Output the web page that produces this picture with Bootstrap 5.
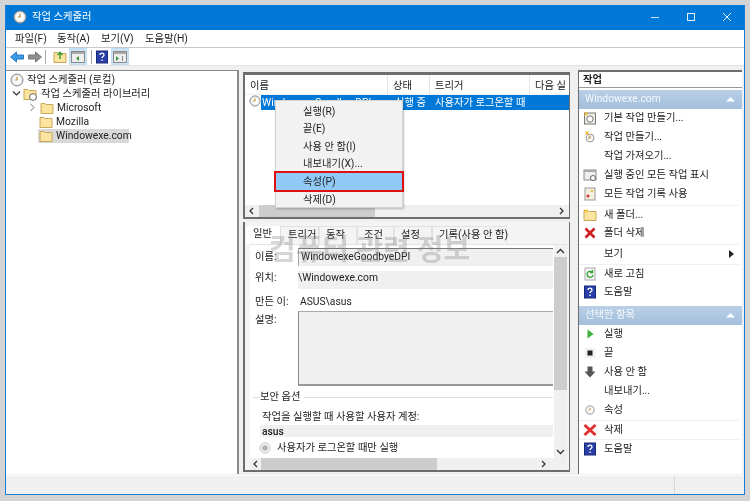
<!DOCTYPE html>
<html lang="ko">
<head>
<meta charset="utf-8">
<title>작업 스케줄러</title>
<link rel="stylesheet" href="https://cdn.jsdelivr.net/npm/bootstrap@5.3.0/dist/css/bootstrap.min.css">
<style>
html,body{margin:0;height:501px;overflow:hidden}
body{background:#d4d4d4;padding:5px;font:10.3px/14px Roboto,"Noto Sans CJK KR",sans-serif;color:#222}
svg{flex:none}
.win{width:740px;height:490px;background:#f0f0f0;border:1px solid #1a7fd4;border-top:0;position:relative;filter:blur(.3px)}
.tbar{height:25px;background:#0078d7;color:#fff;padding-left:7px;gap:5px}
.ctl{width:36px;display:flex;justify-content:center}
.ctls{margin-left:auto;margin-right:-1px}
.mbar{height:18px;background:#fff;border-bottom:1px solid #c8c8c8;padding-top:1px}
.m1{margin-left:9px;width:42px}.m2{width:44px}.m3{width:44px}
.tools{height:18px;background:#fff;padding:1px 0 0 4px;border-bottom:1px solid #e4e4e4}
.tbtn{width:18px;height:17px;background:#cce4f7;border:1px solid #c2dcf0;display:flex;align-items:center;justify-content:center}
.tsep{width:1px;height:14px;background:#a8a8a8}
.g1{margin-right:4px}.g2{margin:0 7px 0 3px}.g3{margin-right:2px}.g4{margin:0 3px 0 4px}
.main{height:405px;margin-top:4px;gap:2px}
.ltree{width:233px;background:#fff;border-top:1px solid #8a8a8a;border-right:2px solid #8a8a8a;padding-top:2px}
.tr{height:14px;display:flex;align-items:center;white-space:nowrap;gap:3px}
.tr1{padding-left:4px}.tr2{padding-left:6px;gap:1px}.tr2 span{margin-left:2px}.tr3{padding-left:22px}
.tr4{padding-left:33px}
.sel1{background:#d9d9d9;width:91px;margin-left:32px;padding-left:1px;gap:3px}
.cent{width:327px;margin-left:2px;gap:3px}
.cpane{border:2px solid #6d6d6d;border-right-width:1px;background:#fff;position:relative}
.ptop{height:147px;margin-top:2px;border-top-width:3px}
.thead{height:20px;border-bottom:1px solid #f0f0f0}
.thead div{border-right:1px solid #e5e5e5;height:20px;padding:4px 0 0 5px;overflow:hidden;white-space:nowrap}
.c1{width:143px}.c2{width:42px}.c3{width:100px}.c4{width:39px;border:0!important}
.rowsel{height:15px;padding-left:4px;white-space:nowrap;gap:0}
.rowblue{background:#0078d7;color:#fff;flex:1;height:15px;padding-left:1px;display:flex;line-height:15px}
.rn{width:132px;display:block}.rst{width:41px;padding-left:1px;display:block;white-space:nowrap}
.hs{background:#f0f0f0;height:12px;display:flex;align-items:center}
.hs b{display:block;background:#cdcdcd;height:12px}
.w1{width:116px}.w2{width:176px}
.hsa{position:absolute;left:0;right:0;bottom:0}
.ra{margin-left:auto}
.cmenu{position:absolute;left:30px;top:25px;width:128px;height:108px;background:#f2f2f2;border:1px solid #d2d2d2;box-shadow:1px 1px 2px rgba(0,0,0,.25);z-index:3;padding-top:2px}
.cm{height:17.4px;padding-left:27px;line-height:17px}
.cmon{background:#91c9f7;outline:2px solid #e01010;outline-offset:-1px;margin:0 -1px;padding-left:28px;height:19px;line-height:19px}
.pbot{height:250px;border-top:0;background:#f4f4f4;padding-top:4px}
.tabs{height:18px;padding-left:1px;background:#f4f4f4;margin:0;border:0;flex-wrap:nowrap}
.tb{padding:1px 4px 0;height:18px;border:1px solid #e2e2e2;border-bottom:0;white-space:nowrap}
.tb0{background:#fff;border-color:#fff;padding:0 7px 0 6px}
.t1{width:39px;padding-left:7px}.t2{width:38px;padding-left:6px}.t3{width:37px;padding-left:6px}.t4{width:38px;padding-left:6px}.t5{width:75px;padding-left:6px}
.tbody{background:#fff;height:226px;margin:0 2px 0 5px;position:relative;border-top:1px solid #e4e4e4;overflow:hidden}
.lbl{position:absolute;left:5px}
.finp{position:absolute;left:48px;width:255px;background:#f0f0f0}
.vs{position:absolute;right:0;top:0;bottom:12px;width:13px;background:#f0f0f0}
.vs i{position:absolute;left:0;right:0;top:12px;height:133px;background:#cdcdcd}
.a{top:3px;height:18px;border-top:1px solid #777;border-left:1px solid #aaa;padding-left:2px;line-height:16px}
.b{top:26px;height:18px;line-height:14px}
.c{top:66px;height:75px;border-top:1px solid #aaa;border-left:1px solid #888;border-bottom:2px solid #999}
.d{top:152px;left:3px;width:300px;height:1px;background:#ddd}
.e{top:180px;left:10px;width:293px;height:12px;padding-left:2px;line-height:13px;font-weight:500}
.l1{top:5px}.l2{top:26px}.l3{top:50px}.l3b{top:50px;left:50px}.l4{top:68px}.l5{top:145px;left:10px;z-index:1}.l6{top:165px;left:12px}.l7{top:197px;left:9px}.l8{top:196px;left:27px}
.rp{width:164px;margin-left:6px;background:#fff;border:2px solid #6d6d6d;border-width:2px 0 0 1px}
.rh{height:16px;font-weight:700;padding-left:4px;border-bottom:1px solid #9a9a9a;line-height:15px}
.rbar{height:19px;margin-top:2px;background:linear-gradient(#b9cfe6,#a3bfdc);color:#f4f8fc;padding:0 7px 0 6px;display:flex;align-items:center;justify-content:space-between}
.rb2{margin-top:4px}
.ri{height:19px;display:flex;align-items:center;padding-left:4px;gap:7px;white-space:nowrap}
.ri svg{width:14px;height:14px}
.ri .tri{width:5px;height:8px;margin-left:auto;margin-right:5px}
.rs{border-top:1px solid #f0f0f0;margin-top:1px;margin-right:3px}
.rt{border-top:1px solid #f0f0f0;margin-right:3px}
.nic{display:block;width:14px;flex:none}
.wm{position:absolute;left:24px;top:13px;font-size:29px;line-height:30px;font-weight:700;color:rgba(130,130,130,.33);z-index:2;white-space:nowrap}
.stat{height:19px;margin-top:1px;background:#f0f0f0;border-top:1px solid #fafafa}
.stat i{display:block;margin-left:auto;width:70px;border-left:1px solid #d8d8d8;height:18px}
.sdef{position:absolute;width:0;height:0}
</style>
</head>
<body>
<svg class="sdef">
<defs>
<symbol id="clk" viewBox="0 0 14 14"><circle cx="7" cy="7" r="6" fill="#e4e4e4" stroke="#8a8a8a"/><circle cx="7" cy="7" r="4.2" fill="#fff"/><path d="M7 3.800V7H4.600" fill="none" stroke="#c09030" stroke-width="1.200"/></symbol>
<symbol id="fld" viewBox="0 0 14 14"><path d="M1 2.500h4l1 1h7v9H1z" fill="#fbe3a0" stroke="#c9a85a"/></symbol>
<symbol id="help" viewBox="0 0 14 14"><rect x="1.500" y="1" width="11" height="12" fill="#2a3fa8" stroke="#182878"/><path d="M5 5c0-2.500 4-2.500 4 0 0 1.500-2 1.500-2 3M7 9.500v1.500" fill="none" stroke="#fff" stroke-width="1.300"/></symbol>
<symbol id="xr" viewBox="0 0 14 14"><path d="M2.500 2.500l9 9M11.500 2.500l-9 9" stroke="#d01c1c" stroke-width="2.600"/></symbol>
</defs>
</svg>
<div class="win d-flex flex-column">
  <div class="tbar d-flex align-items-center">
    <svg width="14" height="14"><use href="#clk"/></svg><span>작업 스케줄러</span>
    <div class="ctls d-flex">
      <div class="ctl"><svg width="10" height="10"><path d="M1 5.500h8" stroke="#cfe6fa"/></svg></div>
      <div class="ctl"><svg width="10" height="10"><rect x="1.500" y="1.500" width="7" height="7" fill="none" stroke="#e4f1fc"/></svg></div>
      <div class="ctl"><svg width="10" height="10"><path d="M1 1l8 8M9 1l-8 8" stroke="#e4f1fc"/></svg></div>
    </div>
  </div>
  <div class="mbar d-flex align-items-center"><span class="m1">파일(F)</span><span class="m2">동작(A)</span><span class="m3">보기(V)</span><span>도움말(H)</span></div>
  <div class="tools d-flex align-items-center">
    <svg width="14" height="14" class="g1"><path d="M.5 7l6-5v3h7v4h-7v3z" fill="#3d9be4" stroke="#2a78c0"/></svg>
    <svg width="14" height="14"><path d="M13.500 7l-6-5v3h-7v4h7v3z" fill="#8f8f8f" stroke="#777"/></svg>
    <span class="tsep g2"></span>
    <svg width="14" height="14" class="g3"><use href="#fld"/><path d="M7 9V3M4.500 5L7 2.200 9.500 5" fill="none" stroke="#3a9a3a" stroke-width="1.400"/></svg>
    <span class="tbtn"><svg width="14" height="12"><rect x=".5" y=".5" width="13" height="11" fill="#eee" stroke="#888"/><rect x="1" y="1" width="12" height="2" fill="#aaa"/><path d="M8 5v5L5 7.500z" fill="#3a9a3a"/></svg></span>
    <span class="tsep g4"></span>
    <svg width="14" height="14" class="g3"><use href="#help"/></svg>
    <span class="tbtn"><svg width="14" height="12"><rect x=".5" y=".5" width="13" height="11" fill="#eee" stroke="#888"/><rect x="1" y="1" width="12" height="2" fill="#aaa"/><path d="M3 5v5l3-2.500z" fill="#3a9a3a"/><path d="M9.500 5v5" stroke="#888"/></svg></span>
  </div>
  <div class="main d-flex">
    <div class="ltree">
      <div class="tr tr1"><svg width="14" height="14"><use href="#clk"/></svg><span>작업 스케줄러 (로컬)</span></div>
      <div class="tr tr2"><svg width="9" height="9"><path d="M1 2.500L4.500 6 8 2.500" fill="none" stroke="#333" stroke-width="1.200"/></svg><svg width="16" height="14"><use href="#fld"/><circle cx="11" cy="10" r="3.400" fill="#fff" stroke="#666"/></svg><span>작업 스케줄러 라이브러리</span></div>
      <div class="tr tr3"><svg width="9" height="9"><path d="M2.500 1L6 4.500 2.500 8" fill="none" stroke="#aaa" stroke-width="1.100"/></svg><svg width="14" height="14"><use href="#fld"/></svg><span>Microsoft</span></div>
      <div class="tr tr4"><svg width="14" height="14"><use href="#fld"/></svg><span>Mozilla</span></div>
      <div class="tr sel1"><svg width="14" height="14"><use href="#fld"/></svg><span>Windowexe.com</span></div>
    </div>
    <div class="cent d-flex flex-column">
      <div class="cpane ptop">
        <div class="thead d-flex">
          <div class="c1">이름</div><div class="c2">상태</div><div class="c3">트리거</div><div class="c4">다음 실</div>
        </div>
        <div class="rowsel d-flex"><svg width="12" height="12"><use href="#clk"/></svg><div class="rowblue"><span class="rn">WindowexeGoodbyeDPI</span><span class="rst">실행 중</span><span>사용자가 로그온할 때</span></div></div>
        <div class="hs hsa"><svg width="14" height="12"><path d="M8 3L5 6l3 3" fill="none" stroke="#333" stroke-width="1.300"/></svg><b class="w1"></b><svg width="14" height="12" class="ra"><path d="M5 3l3 3-3 3" fill="none" stroke="#333" stroke-width="1.300"/></svg></div>
        <div class="cmenu">
          <div class="cm">실행(R)</div><div class="cm">끝(E)</div><div class="cm">사용 안 함(I)</div><div class="cm">내보내기(X)...</div><div class="cm cmon">속성(P)</div><div class="cm">삭제(D)</div>
        </div>
      </div>
      <div class="cpane pbot">
        <div class="wm">컴퓨터 관련 정보</div>
        <div class="tabs d-flex">
          <div class="tb tb0">일반</div><div class="tb t1">트리거</div><div class="tb t2">동작</div><div class="tb t3">조건</div><div class="tb t4">설정</div><div class="tb t5">기록(사용 안 함)</div>
        </div>
        <div class="tbody">
          <span class="lbl l1">이름:</span>
          <div class="finp a">WindowexeGoodbyeDPI</div>
          <span class="lbl l2">위치:</span>
          <div class="finp b">\Windowexe.com</div>
          <span class="lbl l3">만든 이:</span>
          <span class="lbl l3b">ASUS\asus</span>
          <span class="lbl l4">설명:</span>
          <div class="finp c"></div>
          <span class="lbl l5 bg-white pe-1">보안 옵션</span>
          <div class="finp d"></div>
          <span class="lbl l6">작업을 실행할 때 사용할 사용자 계정:</span>
          <div class="finp e">asus</div>
          <svg class="lbl l7" width="12" height="12"><circle cx="6" cy="6" r="5.200" fill="#f0f0f0" stroke="#ccc"/><circle cx="6" cy="6" r="2.800" fill="#b5b5b5"/></svg>
          <span class="lbl l8">사용자가 로그온할 때만 실행</span>
          <div class="vs"><svg width="13" height="12" class="d-block"><path d="M3 8l3.500-3.500L10 8" fill="none" stroke="#333" stroke-width="1.300"/></svg><i></i><svg width="13" height="12" class="position-absolute bottom-0 start-0"><path d="M3 4l3.500 3.500L10 4" fill="none" stroke="#333" stroke-width="1.300"/></svg></div>
          <div class="hs hsa"><svg width="11" height="12"><path d="M7 3L4 6l3 3" fill="none" stroke="#333" stroke-width="1.300"/></svg><b class="w2"></b><svg width="14" height="12" class="ra me-3"><path d="M5 3l3 3-3 3" fill="none" stroke="#333" stroke-width="1.300"/></svg></div>
        </div>
      </div>
    </div>
    <div class="rp">
      <div class="rh">작업</div>
      <div class="rbar"><span>Windowexe.com</span><svg width="9" height="6"><path d="M0 5.500L4.500 1 9 5.500z" fill="#fff"/></svg></div>
      <div class="ri"><svg viewBox="0 0 14 14"><rect x="1.500" y="2" width="11" height="11" fill="#f0efe6" stroke="#777"/><circle cx="7" cy="8" r="3.200" fill="#fff" stroke="#777"/><path d="M1 1l2 1 2-1-1 2 1 2-2-1-2 1 1-2z" fill="#f0c030"/></svg><span>기본 작업 만들기...</span></div>
      <div class="ri"><svg viewBox="0 0 14 14"><circle cx="7" cy="8" r="4" fill="#f4f4f4" stroke="#999"/><path d="M7 5.500V8H5" fill="none" stroke="#b08030"/><path d="M2 1l2 1 2-1-1 2 1 2-2-1-2 1 1-2z" fill="#f0b020"/></svg><span>작업 만들기...</span></div>
      <div class="ri"><i class="nic"></i><span>작업 가져오기...</span></div>
      <div class="ri"><svg viewBox="0 0 14 14"><rect x="1" y="2" width="12" height="10" fill="#eee" stroke="#888"/><rect x="1" y="2" width="12" height="2" fill="#aaa"/><circle cx="10" cy="10" r="2.500" fill="#fff" stroke="#666"/></svg><span>실행 중인 모든 작업 표시</span></div>
      <div class="ri"><svg viewBox="0 0 14 14"><rect x="2" y="1" width="10" height="12" fill="#f4f0e0" stroke="#999"/><circle cx="5" cy="9" r="1.500" fill="#d03030"/><path d="M8 3l1 2 1-2" fill="#e8b830" stroke="#e8b830"/></svg><span>모든 작업 기록 사용</span></div>
      <div class="ri rs"><svg viewBox="0 0 14 14"><use href="#fld"/><path d="M1 1l2 1 2-1-1 2 1 2-2-1-2 1 1-2z" fill="#f0c030"/></svg><span>새 폴더...</span></div>
      <div class="ri"><svg><use href="#xr"/></svg><span>폴더 삭제</span></div>
      <div class="ri rs"><i class="nic"></i><span>보기</span><svg class="tri" viewBox="0 0 5 8"><path d="M0 0l5 4-5 4z" fill="#222"/></svg></div>
      <div class="ri rs"><svg viewBox="0 0 14 14"><rect x="2" y="1" width="10" height="12" fill="#f4f4f4" stroke="#aaa"/><path d="M10 8a3 3 0 1 1-1-3M9.500 3v2.500H7" fill="none" stroke="#2ea02e" stroke-width="1.300"/></svg><span>새로 고침</span></div>
      <div class="ri"><svg><use href="#help"/></svg><span>도움말</span></div>
      <div class="rbar rb2"><span>선택한 항목</span><svg width="9" height="6"><path d="M0 5.500L4.500 1 9 5.500z" fill="#fff"/></svg></div>
      <div class="ri"><svg viewBox="0 0 14 14"><path d="M4.500 2.500v9l6-4.500z" fill="#3cb03c"/></svg><span>실행</span></div>
      <div class="ri"><svg viewBox="0 0 14 14"><rect x="2" y="2" width="10" height="10" fill="#f0f0f0"/><rect x="4.500" y="4.500" width="5" height="5" fill="#222"/></svg><span>끝</span></div>
      <div class="ri"><svg viewBox="0 0 14 14"><path d="M4.500 1.500h5v5h3L7 12.500 1.500 6.500h3z" fill="#555"/></svg><span>사용 안 함</span></div>
      <div class="ri"><i class="nic"></i><span>내보내기...</span></div>
      <div class="ri"><svg viewBox="0 0 14 14"><use href="#clk" width="10" height="10" x="2" y="2"/></svg><span>속성</span></div>
      <div class="ri rt"><svg viewBox="0 0 14 14"><path d="M1.500 2l11 10M12.500 2l-11 10" stroke="#e03030" stroke-width="3"/></svg><span>삭제</span></div>
      <div class="ri rt"><svg><use href="#help"/></svg><span>도움말</span></div>
    </div>
  </div>
  <div class="stat"><i></i></div>
</div>
</body>
</html>
